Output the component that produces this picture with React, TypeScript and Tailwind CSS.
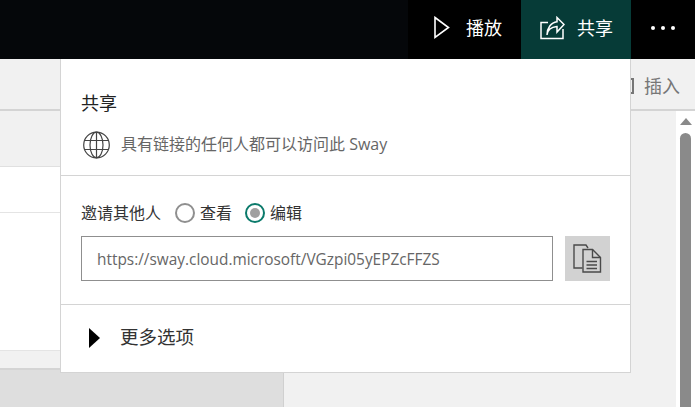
import React from 'react';

const font = { cjk: 'font-["Open_Sans","Noto_Sans_CJK_SC",sans-serif]' };

const PlayIcon = () => (
  <svg width="18" height="24" viewBox="0 0 18 24" fill="none" stroke="white" strokeWidth="1.6">
    <path d="M2 1.5 L15.5 11.5 L2 21.5 Z" />
  </svg>
);

const ShareIcon = () => (
  <svg width="25" height="24" viewBox="0 0 25 24" fill="none" stroke="white" strokeWidth="1.5">
    <path d="M8 6.5H1V22.5H23V13" />
    <path d="M7 19C7.5 14 11 11 17 10.5V16L24 8.5L17 1.5V5.8C11 6.5 7 12 7 19Z" />
  </svg>
);

const GlobeIcon = () => (
  <svg width="27" height="28" viewBox="0 0 27 28" fill="none" stroke="#444" strokeWidth="1.2">
    <circle cx="13.5" cy="14" r="12.8" />
    <ellipse cx="13.5" cy="14" rx="6.5" ry="12.8" />
    <path d="M13.5 1V27M2 9.5H25M2 18.5H25" />
  </svg>
);

const CopyIcon = () => (
  <svg width="29" height="29" viewBox="0 0 29 29" fill="none" stroke="#4a4a4a" strokeWidth="1.4">
    <path d="M9.5 24H1V1H13L15 4" />
    <path d="M10 5.5H19.5L27.5 13.5V28H10Z" />
    <path d="M19.5 5.5V13.5H27.5" />
    <path d="M13.5 17.5H24M13.5 21H24M13.5 24.5H24" strokeWidth="1.5" />
  </svg>
);

const Radio = ({ checked, label }: { checked?: boolean; label: string }) => (
  <div className="flex items-center gap-[5px]">
    <span
      className={`flex h-5 w-5 items-center justify-center rounded-full border-2 bg-white ${
        checked ? 'border-[#0b7a6b]' : 'border-[#8f8f8f]'
      }`}
    >
      {checked && <span className="h-[10px] w-[10px] rounded-full bg-[#a0a0a0]" />}
    </span>
    <span className="text-base text-[#333]">{label}</span>
  </div>
);

const SharePopup = () => (
  <div className="absolute left-[60px] top-[59px] h-[314px] w-[571px] border-x border-b border-[#d4d4d4] bg-white">
    <div className="h-[117px] border-b border-[#d4d4d4] px-5 pt-[32px]">
      <div className="text-lg leading-6 text-[#222]">共享</div>
      <div className="mt-4 flex items-center gap-[11px] pl-[2px]">
        <GlobeIcon />
        <span className="pb-[3px] text-base text-[#666]">具有链接的任何人都可以访问此 Sway</span>
      </div>
    </div>
    <div className="h-[129px] border-b border-[#d4d4d4] px-5 pt-[27px]">
      <div className="flex h-5 items-center">
        <span className="mr-[14px] text-base text-[#333]">邀请其他人</span>
        <div className="flex items-center gap-[13px]">
          <Radio label="查看" />
          <Radio checked label="编辑" />
        </div>
      </div>
      <div className="mt-[13px] flex gap-3">
        <div className="flex h-[45px] w-[472px] items-center border border-[#8f8f8f] pl-[15px] pt-[3px] text-[15.4px] text-[#666]">
          https://sway.cloud.microsoft/VGzpi05yEPZcFFZS
        </div>
        <button className="flex h-[45px] w-[45px] items-center justify-center bg-[#d2d2d2]">
          <CopyIcon />
        </button>
      </div>
    </div>
    <div className="flex items-center pl-7 pt-[22px]">
      <span className="h-0 w-0 border-y-[10px] border-l-[11px] border-y-transparent border-l-black" />
      <span className="ml-[20px] pb-[2px] text-[18.5px] leading-[20px] text-[#333]">更多选项</span>
    </div>
  </div>
);

export default function App() {
  return (
    <div className={`relative flex h-[407px] w-[695px] flex-col overflow-hidden bg-[#f1f1f1] ${font.cjk}`}>
      <header className="flex h-[59px] shrink-0 justify-end bg-[#05070a]">
        <div className="flex w-[113px] items-center bg-black pb-[3px] pl-[25px] text-white">
          <PlayIcon />
          <span className="ml-[15px] text-lg">播放</span>
        </div>
        <div className="flex w-[110px] items-center bg-[#063b37] pb-[3px] pl-[19px] text-white">
          <ShareIcon />
          <span className="ml-[12px] text-lg">共享</span>
        </div>
        <div className="flex w-[64px] items-center justify-center gap-[6px] bg-black pb-[3px]">
          <span className="h-1 w-1 rounded-full bg-white" />
          <span className="h-1 w-1 rounded-full bg-white" />
          <span className="h-1 w-1 rounded-full bg-white" />
        </div>
      </header>

      <div className="flex min-h-0 flex-1 flex-col">
        <div className="flex h-[52px] shrink-0 items-center justify-end border-b-2 border-[#d4d4d4] pr-[15px] pt-1 text-lg text-[#777]">
          <span className="mr-[10px] h-4 w-[14px] border-2 border-[#777]" />
          插入
        </div>
        <div className="flex min-h-0 flex-1">
          <div className="flex w-[283px] shrink-0 flex-col">
            <div className="h-[56px] border-b border-[#e0e0e0]" />
            <div className="h-[46px] border-b border-[#e4e4e4] bg-white" />
            <div className="h-[138px] border-b border-[#e4e4e4] bg-white" />
            <div className="h-[19px] border-b-2 border-[#d4d4d4]" />
            <div className="flex-1 bg-[#dedede]" />
          </div>
          <div className="flex min-w-0 flex-1 justify-end border-l border-[#d0d0d0]">
            <div className="flex w-[19px] flex-col items-center bg-white pt-[7px]">
              <span className="h-0 w-0 border-x-[6.5px] border-b-[7px] border-x-transparent border-b-[#8a8a8a]" />
              <div className="mt-2 w-[11px] flex-1 rounded-t-full bg-[#8a8a8a]" />
            </div>
          </div>
        </div>
      </div>

      <SharePopup />
    </div>
  );
}
